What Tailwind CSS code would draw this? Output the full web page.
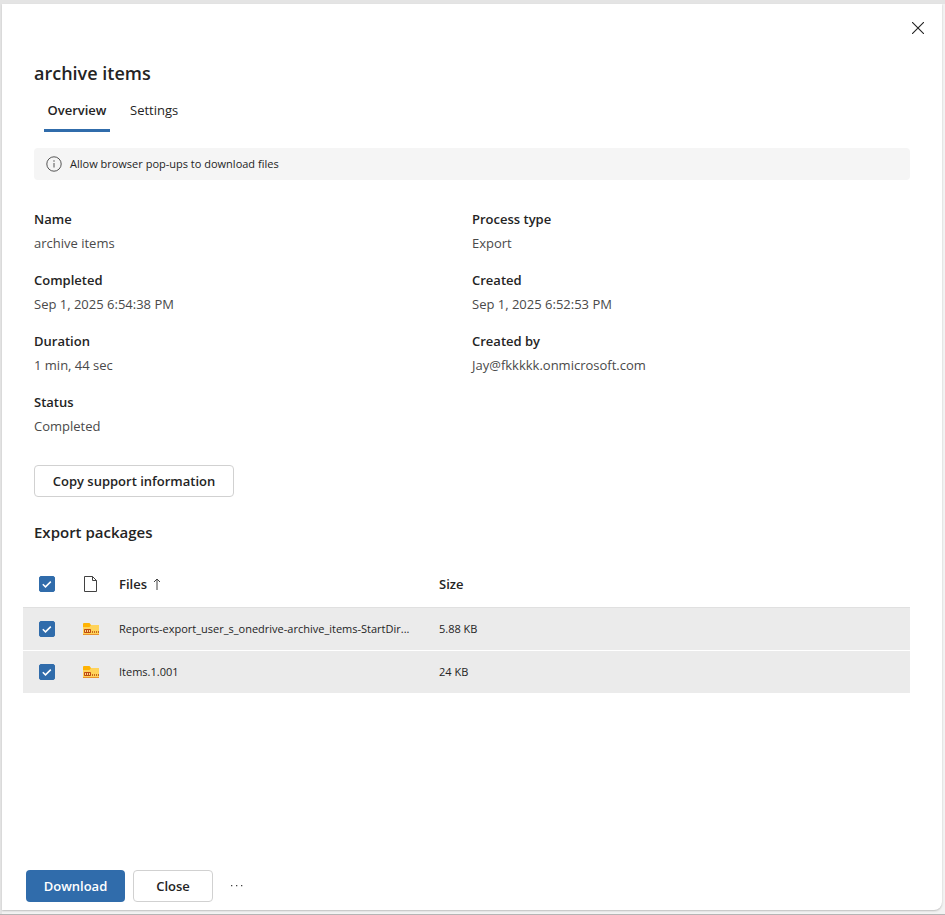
<!DOCTYPE html>
<html lang="en">
<head>
<meta charset="utf-8">
<meta name="viewport" content="width=device-width, initial-scale=1">
<title>archive items</title>
<script src="https://cdn.jsdelivr.net/npm/@tailwindcss/browser@4"></script>
</head>
<body class="flex min-h-screen flex-col border-b border-[#b5b5b5] bg-[#f3f3f3] pt-1 pr-[3px] pb-1 pl-0.5 font-['Open_Sans','Noto_Sans',sans-serif] text-[13px] leading-6 text-[#242424] shadow-[inset_2px_4px_0_#e4e4e4]">
<main role="dialog" aria-labelledby="title" class="flex grow flex-col rounded-br-lg bg-white shadow-[0_1px_2px_#bdbdbd]">
  <div class="flex justify-end pt-2 pr-2">
    <button type="button" aria-label="Close panel" class="grid size-8 place-items-center">
      <svg class="size-3" viewBox="0 0 12 12" fill="none" stroke="#222" stroke-width="1.1"><path d="M0 0l12 12M12 0L0 12"/></svg>
    </button>
  </div>

  <div class="flex grow flex-col px-8 pt-[15px]">
    <h1 id="title" class="text-lg leading-7 font-semibold">archive items</h1>
    <div role="tablist" class="mt-2 flex h-[37px] gap-2 px-2.5">
      <button type="button" role="tab" aria-selected="true" class="flex w-[66px] flex-col items-center border-b-3 border-[#306cab] pt-[3px] font-semibold">Overview</button>
      <button type="button" role="tab" aria-selected="false" class="flex flex-col px-3 pt-[3px]">Settings</button>
    </div>

    <div class="mt-4 flex h-8 items-center gap-2 rounded bg-[#f5f5f5] px-3 text-[11px]">
      <svg class="size-4" viewBox="0 0 16 16" fill="none" stroke="#555"><circle cx="8" cy="8" r="7.2"/><path d="M8 7v4.5"/><circle cx="8" cy="4.9" r=".75" fill="#555" stroke="none"/></svg>
      <span>Allow browser pop-ups to download files</span>
    </div>

    <dl class="mt-[27px] grid grid-cols-2 gap-y-[13px] text-[#4a4a4a] [&_dt]:font-semibold [&_dt]:text-[#242424]">
      <div><dt>Name</dt><dd>archive items</dd></div>
      <div><dt>Process type</dt><dd>Export</dd></div>
      <div><dt>Completed</dt><dd>Sep 1, 2025 6:54:38 PM</dd></div>
      <div><dt>Created</dt><dd>Sep 1, 2025 6:52:53 PM</dd></div>
      <div><dt>Duration</dt><dd>1 min, 44 sec</dd></div>
      <div><dt>Created by</dt><dd>Jay@fkkkkk.onmicrosoft.com</dd></div>
      <div><dt>Status</dt><dd>Completed</dd></div>
    </dl>

    <button type="button" class="mt-[27px] h-8 w-[200px] self-start rounded border border-[#d1d1d1] font-semibold">Copy support information</button>

    <h2 class="mt-[23px] text-[15px] leading-6 font-semibold">Export packages</h2>

    <table class="mt-[18px] -ml-[11px] w-[calc(100%+11px)] table-fixed border-collapse text-left text-[11px]">
      <colgroup><col class="w-12"><col class="w-12"><col class="w-80"><col></colgroup>
      <thead>
        <tr class="h-[45px] border-b border-[#e0e0e0] text-[13px]">
          <th class="pl-4">
            <label class="relative block size-4"><input type="checkbox" checked aria-label="Select all files" class="block size-4 appearance-none rounded-xs border border-[#616161] checked:border-[#306cab] checked:bg-[#306cab]"><svg class="pointer-events-none absolute inset-0 size-4" viewBox="0 0 16 16" fill="none" stroke="#fff" stroke-width="1.5"><path d="M3.8 8.2l2.7 2.7 5.3-5.3"/></svg></label>
          </th>
          <th class="pl-3"><svg aria-label="File type" class="size-4" viewBox="0 0 16 16" fill="none" stroke="#424242"><path d="M1.5.5h8l4 4v11h-12zM9.5.5v4h4"/></svg></th>
          <th class="font-semibold"><span class="flex items-center gap-1.5">Files <svg aria-label="Sorted ascending" class="h-3 w-2" viewBox="0 0 8 12" fill="none" stroke="#424242"><path d="M4 12V1M1 4l3-3 3 3"/></svg></span></th>
          <th class="font-semibold">Size</th>
        </tr>
      </thead>
      <tbody class="bg-[#ebebeb]">
        <tr class="h-[43px] border-b border-white">
          <td class="pl-4">
            <label class="relative block size-4"><input type="checkbox" checked aria-label="Select Reports export" class="block size-4 appearance-none rounded-xs border border-[#616161] checked:border-[#306cab] checked:bg-[#306cab]"><svg class="pointer-events-none absolute inset-0 size-4" viewBox="0 0 16 16" fill="none" stroke="#fff" stroke-width="1.5"><path d="M3.8 8.2l2.7 2.7 5.3-5.3"/></svg></label>
          </td>
          <td class="pl-3"><svg aria-label="Archive" class="size-4" viewBox="0 0 16 16"><path d="M0 4h16v9H0z" fill="#ffd35a"/><path d="M0 3q0-1 1-1h5.5L8 4 6.5 6H0z" fill="#ffb302"/><path d="M0 13h16v1H0z" fill="#e8912d"/><rect x="1" y="8" width="7" height="4" rx=".7" fill="#bf4b12"/><path d="M2 9h1v2H2zM4 9h1v2H4zM6 9h1v2H6z" fill="#ffd98a"/><path d="M9 10h1v2H9zM11 10h1v2h-1zM13 10h1v2h-1zM15 10h1v2h-1z" fill="#c66a1c"/></svg></td>
          <td class="whitespace-nowrap">Reports-export_user_s_onedrive-archive_items-StartDir...</td>
          <td>5.88 KB</td>
        </tr>
        <tr class="h-[43px]">
          <td class="pl-4">
            <label class="relative block size-4"><input type="checkbox" checked aria-label="Select Items.1.001" class="block size-4 appearance-none rounded-xs border border-[#616161] checked:border-[#306cab] checked:bg-[#306cab]"><svg class="pointer-events-none absolute inset-0 size-4" viewBox="0 0 16 16" fill="none" stroke="#fff" stroke-width="1.5"><path d="M3.8 8.2l2.7 2.7 5.3-5.3"/></svg></label>
          </td>
          <td class="pl-3"><svg aria-label="Archive" class="size-4" viewBox="0 0 16 16"><path d="M0 4h16v9H0z" fill="#ffd35a"/><path d="M0 3q0-1 1-1h5.5L8 4 6.5 6H0z" fill="#ffb302"/><path d="M0 13h16v1H0z" fill="#e8912d"/><rect x="1" y="8" width="7" height="4" rx=".7" fill="#bf4b12"/><path d="M2 9h1v2H2zM4 9h1v2H4zM6 9h1v2H6z" fill="#ffd98a"/><path d="M9 10h1v2H9zM11 10h1v2h-1zM13 10h1v2h-1zM15 10h1v2h-1z" fill="#c66a1c"/></svg></td>
          <td>Items.1.001</td>
          <td>24 KB</td>
        </tr>
      </tbody>
    </table>
  </div>

  <footer class="flex items-center gap-2 px-6 pt-4 pb-2">
    <button type="button" class="h-8 w-[99px] rounded bg-[#306cab] font-semibold text-white">Download</button>
    <button type="button" class="h-8 w-20 rounded border border-[#d1d1d1] font-semibold">Close</button>
    <button type="button" aria-label="More actions" class="grid h-8 w-8 place-items-center"><svg class="h-1 w-3" viewBox="0 0 12 4" fill="#424242"><path d="M0 1h1.3v1.3H0zM5 1h1.3v1.3H5zM10 1h1.3v1.3H10z"/></svg></button>
  </footer>
</main>
</body>
</html>
